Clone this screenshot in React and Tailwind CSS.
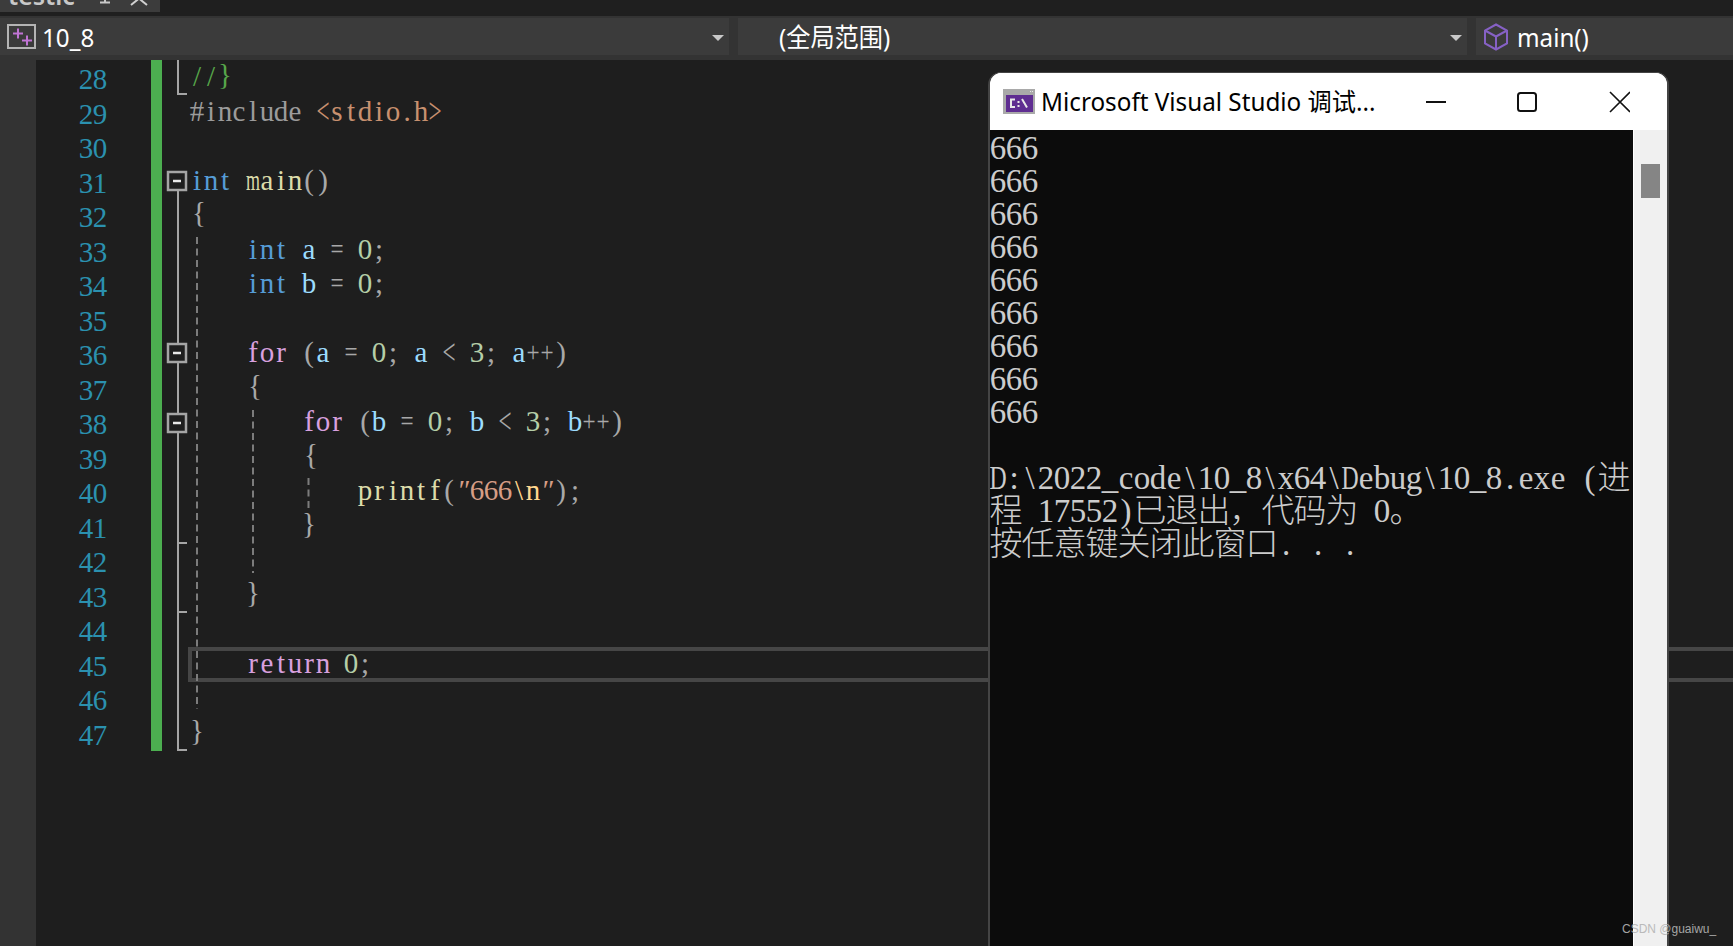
import React from "react";

const SCALE = {
  m: "scale-x-[0.62]", w: "scale-x-[0.72]", D: "scale-x-[0.72]",
  "<": "scale-x-[0.8] scale-y-[1.25]", ">": "scale-x-[0.8] scale-y-[1.25]",
  "=": "scale-x-[0.8]", "+": "scale-x-[0.8]", '"': "-skew-x-12",
  "{": "-translate-y-[2px] translate-x-[2px]", "}": "-translate-y-[2px]",
};

function isWide(c) {
  return c.charCodeAt(0) > 0x2e80;
}

function Mono({ text, console: isConsole }) {
  return Array.from(text).map((c, i) => {
    const width = isConsole
      ? isWide(c) ? "w-[32px]" : "w-[16px]"
      : "w-[14px]";
    return (
      <span key={i} className={`inline-flex justify-center ${width} ${SCALE[c] || ""}`}>
        {c === " " ? "\u00a0" : c}
      </span>
    );
  });
}

const KW = "text-[#569cd6]";
const FN = "text-[#dcdcaa]";
const PN = "text-[#a8a8a8]";
const CT = "text-[#d8a0df]";
const VR = "text-[#9cdcfe]";
const NM = "text-[#b5cea8]";
const ST = "text-[#d69d85]";
const ES = "text-[#ffd68f]";

const CODE = [
  [["//}", "text-[#57a64a]"]],
  [["#include ", "text-[#9b9b9b]"], ["<stdio.h>", "text-[#c8906f]"]],
  [],
  [["int", KW], [" ", PN], ["main", FN], ["()", PN]],
  [["{", PN]],
  [["    "], ["int", KW], [" ", PN], ["a", VR], [" = ", PN], ["0", NM], [";", PN]],
  [["    "], ["int", KW], [" ", PN], ["b", VR], [" = ", PN], ["0", NM], [";", PN]],
  [],
  [["    "], ["for", CT], [" (", PN], ["a", VR], [" = ", PN], ["0", NM], ["; ", PN], ["a", VR], [" < ", PN], ["3", NM], ["; ", PN], ["a", VR], ["++)", PN]],
  [["    {", PN]],
  [["        "], ["for", CT], [" (", PN], ["b", VR], [" = ", PN], ["0", NM], ["; ", PN], ["b", VR], [" < ", PN], ["3", NM], ["; ", PN], ["b", VR], ["++)", PN]],
  [["        {", PN]],
  [["            "], ["printf", FN], ["(", PN], ['"666', ST], ["\\n", ES], ['"', ST], [")", PN], [";", PN]],
  [["        }", PN]],
  [],
  [["    }", PN]],
  [],
  [["    "], ["return", CT], [" ", PN], ["0", NM], [";", PN]],
  [],
  [["}", PN]],
];

const CONSOLE = [
  "666", "666", "666", "666", "666", "666", "666", "666", "666", "",
  "D:\\2022_code\\10_8\\x64\\Debug\\10_8.exe (进",
  "程 17552)已退出，代码为 0。",
  "按任意键关闭此窗口. . .",
];

function Arrow() {
  return <div className="w-0 h-0 border-x-[6px] border-x-transparent border-t-[6px] border-t-[#c8c8c8]" />;
}

function TabStrip() {
  return (
    <div className="h-[16px] bg-[#1f1f1f] shrink-0">
      <div className="relative w-[160px] h-[12px] bg-[#3c3c3c] overflow-hidden">
        <div className="absolute left-[8px] -top-[17px] text-[25px] leading-[25px] font-semibold text-[#c8c8c8] font-['Noto_Sans',sans-serif]">
          testlc
        </div>
        <svg className="absolute left-0 top-0" width="160" height="12" fill="none">
          <path d="M100 2.5H110M105 0V2.5" stroke="#c8c8c8" strokeWidth="2" />
          <path d="M131 -8L147 5M147 -8L131 5" stroke="#d0d0d0" strokeWidth="2" />
        </svg>
      </div>
    </div>
  );
}

function NavBar() {
  const nav = "text-[26px] leading-none text-white font-['Noto_Sans','Noto_Sans_CJK_SC',sans-serif] scale-x-[0.93] origin-left";
  return (
    <div className="relative z-10 h-[44px] shrink-0 bg-[#333333] flex pt-[2px] pb-[5px] gap-[9px]">
      <div className="w-[729px] bg-[#3b3b3b] flex items-center relative">
        <svg className="ml-[7px] shrink-0" width="29" height="25" viewBox="0 0 29 25" fill="none">
          <rect x="1" y="1" width="27" height="23" stroke="#b4b4b4" strokeWidth="2" />
          <path d="M6 9.5H16M11 4.5V14.5M15 16.5H25M20 11.5V21.5" stroke="#c074d4" strokeWidth="2" />
        </svg>
        <span className={`${nav} ml-[6px]`}>10_8</span>
        <div className="absolute right-[5px] top-[17px]"><Arrow /></div>
      </div>
      <div className="w-[729px] bg-[#3b3b3b] flex items-center relative pl-[41px]">
        <span className={nav}>(全局范围)</span>
        <div className="absolute right-[5px] top-[17px]"><Arrow /></div>
      </div>
      <div className="flex-1 bg-[#3b3b3b] flex items-center pl-[7px]">
        <svg width="26" height="28" viewBox="0 0 26 28" fill="none" stroke="#8661c5" strokeWidth="2">
          <path d="M13 1.5L24 7.5V20.5L13 26.5L2 20.5V7.5Z" />
          <path d="M2 7.5L13 13.5L24 7.5M13 13.5V26.5" />
        </svg>
        <span className={`${nav} ml-[8px]`}>main()</span>
      </div>
    </div>
  );
}

function Editor() {
  const mono = "text-[29px] font-['Liberation_Serif','Noto_Sans_CJK_SC',serif] whitespace-pre";
  return (
    <div className="relative flex-1 flex bg-[#1e1e1e]">
      <div className="w-[36px] bg-[#333333] shrink-0" />
      <div className={`${mono} w-[71px] shrink-0 pt-[2px] text-right text-[#2b91af]`}>
        {Array.from({ length: 20 }, (_, i) => (
          <div key={i} className="h-[34.5px] leading-[34.5px]"><Mono text={String(28 + i)} /></div>
        ))}
      </div>
      <div className="ml-[44px] w-[11px] h-[691px] bg-[#4caf50] shrink-0" />
      <div className={`${mono} ml-[28px]`}>
        {CODE.map((toks, i) => (
          <div key={i} className="h-[34.5px] leading-[32.5px]">
            {toks.map(([t, cls], j) => (
              <span key={j} className={cls}><Mono text={t} /></span>
            ))}
          </div>
        ))}
      </div>
      <div className="absolute left-[188px] right-0 top-[587px] h-[35px] border-y-[4px] border-l-[4px] border-[#464646]" />
    </div>
  );
}

function Overlay() {
  const boxes = [172, 344, 414];
  return (
    <svg className="absolute left-0 top-0 pointer-events-none" width="1733" height="946" fill="none">
      <path
        d="M178 60V94H187M178 191V344M178 363V414M178 433V750H187M178 543H187M178 612H187"
        stroke="#a5a5a5"
        strokeWidth="2"
      />
      <path d="M197 237V709M253 410V573M308.5 478V508" stroke="#7c7c7c" strokeWidth="2" strokeDasharray="7 4.5" />
      {boxes.map((y) => (
        <g key={y}>
          <rect x="168" y={y} width="18" height="18" fill="#1e1e1e" stroke="#a5a5a5" strokeWidth="2.5" />
          <path d={`M173 ${y + 9}H181`} stroke="#e8e8e8" strokeWidth="2.5" />
        </g>
      ))}
    </svg>
  );
}

function ConsoleWindow() {
  return (
    <div className="absolute z-20 left-[988px] top-[72px] w-[681px] h-[874px] border-x-[2px] border-t-[1px] border-[#444444] rounded-t-[13px] overflow-hidden flex flex-col bg-white">
      <div className="h-[57px] shrink-0 bg-white flex items-center pl-[13px]">
        <svg className="shrink-0" width="32" height="25" viewBox="0 0 32 25">
          <rect width="32" height="25" fill="#a9a9a9" />
          <rect x="3" y="6" width="27" height="17" fill="#5f2d91" />
          <path d="M27 2h1v1h-1zM29 2h1v1h-1z" fill="#e8e8e8" />
          <path d="M12 10.5H8V18H12M15.5 12V14M15.5 16V18M19 10L24 18.5" stroke="#e8e8e8" strokeWidth="2" fill="none" />
        </svg>
        <div className="ml-[6px] w-[334px] shrink-0 text-[25px] leading-none text-black font-['Noto_Sans','Noto_Sans_CJK_SC',sans-serif] whitespace-nowrap scale-x-[0.97] origin-left">
          Microsoft Visual Studio 调试...
        </div>
        <svg className="ml-[51px] shrink-0" width="204" height="22" viewBox="0 0 204 22" fill="none" stroke="#111111" strokeWidth="2">
          <path d="M0 11H20" />
          <rect x="92" y="2" width="18" height="18" rx="2.5" />
          <path d="M184 1L204 21M204 1L184 21" strokeWidth="1.6" />
        </svg>
      </div>
      <div className="flex-1 flex min-h-0">
        <div className="w-[643px] bg-[#0c0c0c] pt-[1.5px] text-[#cccccc] text-[33px] font-light font-['Liberation_Serif','Noto_Sans_CJK_SC',serif] whitespace-pre overflow-hidden">
          {CONSOLE.map((l, i) => (
            <div key={i} className="h-[33px] leading-[33px]"><Mono text={l} console /></div>
          ))}
        </div>
        <div className="flex-1 ml-[1px] bg-[#f0f0f0] pt-[34px] pl-[7px]">
          <div className="w-[19px] h-[34px] bg-[#858585]" />
        </div>
      </div>
    </div>
  );
}

export default function App() {
  return (
    <div className="relative w-[1733px] h-[946px] overflow-hidden flex flex-col bg-[#1e1e1e]">
      <TabStrip />
      <NavBar />
      <Editor />
      <Overlay />
      <ConsoleWindow />
      <div className="absolute z-30 left-[1622px] top-[922px] text-[12px] leading-[14px] text-[#b5b5b5] font-['Liberation_Sans',sans-serif] opacity-90">
        CSDN @guaiwu_
      </div>
    </div>
  );
}
